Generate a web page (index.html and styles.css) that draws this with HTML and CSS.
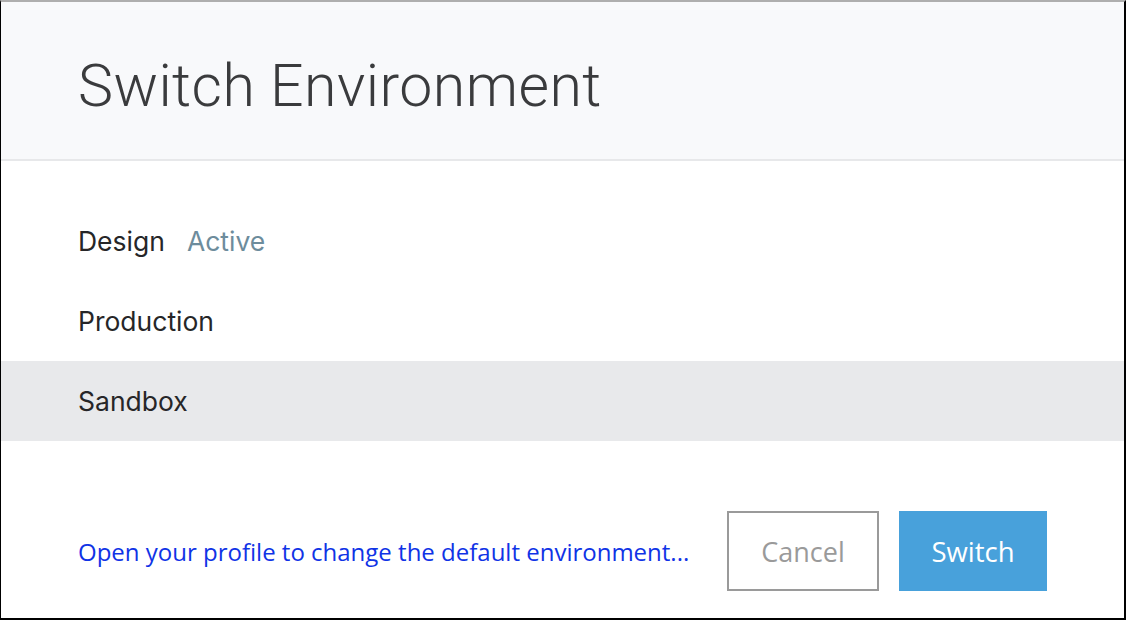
FILE: index.html
```html
<!DOCTYPE html>
<html>
<head>
<meta charset="utf-8">
<link rel="stylesheet" href="styles.css">
</head>
<body>
<div class="dialog">
  <header class="header">
    <h1 class="title">Switch Environment</h1>
  </header>
  <div class="body">
    <ul class="list">
      <li class="item"><span class="name">Design</span><span class="active">Active</span></li>
      <li class="item"><span class="name">Production</span></li>
      <li class="item selected"><span class="name">Sandbox</span></li>
    </ul>
  </div>
  <footer class="footer">
    <a class="link" href="#">Open your profile to change the default environment...</a>
    <div class="buttons">
      <button class="btn cancel">Cancel</button>
      <button class="btn primary">Switch</button>
    </div>
  </footer>
</div>
</body>
</html>
```
FILE: styles.css
```css
* { box-sizing: border-box; }
html, body { margin: 0; padding: 0; }
body { width: 1126px; height: 620px; overflow: hidden; background: #fff; }
.dialog {
  width: 1126px;
  height: 620px;
  border-top: 2px solid #aeaeae;
  border-left: 1px solid #000;
  border-right: 2px solid #000;
  border-bottom: 2px solid #000;
  display: flex;
  flex-direction: column;
  background: #fff;
}
.header {
  height: 159px;
  background: #f8f9fb;
  border-bottom: 2px solid #e7e8ea;
  display: flex;
  align-items: center;
  padding-left: 77px;
  padding-top: 10px;
}
.title {
  margin: 0;
  font-family: Roboto, "Liberation Sans", sans-serif;
  font-weight: 300;
  font-size: 59px;
  color: #3a3b3d;
  letter-spacing: 0.45px;
}
.body { padding-top: 40px; }
.list { list-style: none; margin: 0; padding: 0; }
.item {
  height: 80px;
  display: flex;
  align-items: center;
  padding-left: 77px;
  font-family: Inter, "Liberation Sans", sans-serif;
  font-size: 26.5px;
  color: #262628;
}
.item.selected { background: #e8e9eb; }
.active { color: #6d8c9c; margin-left: 22px; }
.footer {
  margin-top: auto;
  padding: 0 77px 27px 77px;
  display: flex;
  align-items: center;
  justify-content: space-between;
}
.link {
  font-family: "Open Sans", sans-serif;
  font-size: 24px;
  color: #1033e6;
  text-decoration: none;
}
.buttons { display: flex; gap: 20px; }
.btn {
  height: 80px;
  font-family: "Open Sans", sans-serif;
  font-size: 27px;
  border: 2px solid #9a9a9a;
  background: #fff;
  color: #9a9a9a;
  padding: 0;
  cursor: pointer;
}
.cancel { width: 152px; }
.primary { width: 148px; background: #48a1db; border-color: #48a1db; color: #fff; font-size: 27.5px; }
```
